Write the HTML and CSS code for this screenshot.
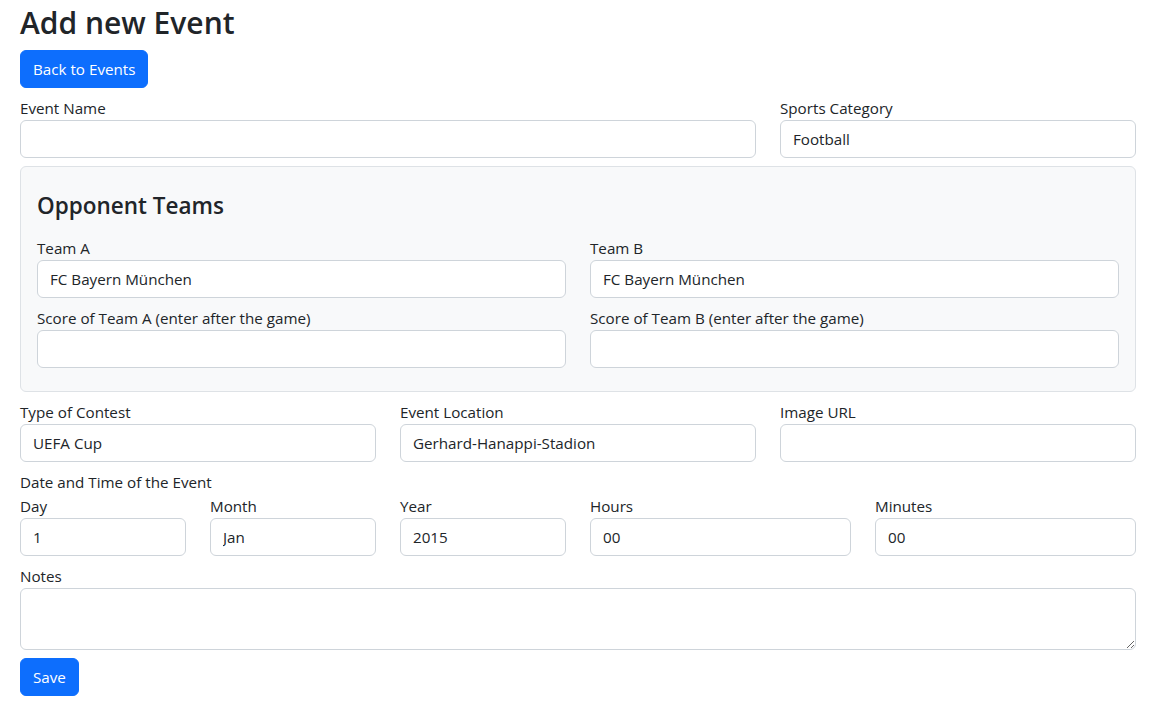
FILE: index.html
```html
<!DOCTYPE html>
<html lang="en">
<head>
<meta charset="utf-8">
<title>Add new Event</title>
<link rel="stylesheet" href="styles.css">
</head>
<body>
<div class="page">
  <h1 class="title">Add new Event</h1>
  <button class="btn back">Back to Events</button>
  <form class="form">
    <div class="row">
      <div class="col col-8 group">
        <label class="label">Event Name</label>
        <input class="field" type="text" value="">
      </div>
      <div class="col col-4 group">
        <label class="label">Sports Category</label>
        <input class="field" type="text" value="Football">
      </div>
    </div>
    <div class="panel">
      <h4 class="panel-title">Opponent Teams</h4>
      <div class="row">
        <div class="col col-6 group">
          <label class="label">Team A</label>
          <input class="field" type="text" value="FC Bayern München">
        </div>
        <div class="col col-6 group">
          <label class="label">Team B</label>
          <input class="field" type="text" value="FC Bayern München">
        </div>
        <div class="col col-6 group">
          <label class="label">Score of Team A (enter after the game)</label>
          <input class="field" type="text" value="">
        </div>
        <div class="col col-6 group">
          <label class="label">Score of Team B (enter after the game)</label>
          <input class="field" type="text" value="">
        </div>
      </div>
    </div>
    <div class="row">
      <div class="col col-4 group">
        <label class="label">Type of Contest</label>
        <input class="field" type="text" value="UEFA Cup">
      </div>
      <div class="col col-4 group">
        <label class="label">Event Location</label>
        <input class="field" type="text" value="Gerhard-Hanappi-Stadion">
      </div>
      <div class="col col-4 group">
        <label class="label">Image URL</label>
        <input class="field" type="text" value="">
      </div>
    </div>
    <div class="label date-label">Date and Time of the Event</div>
    <div class="row">
      <div class="col col-2 group">
        <label class="label">Day</label>
        <input class="field" type="text" value="1">
      </div>
      <div class="col col-2 group">
        <label class="label">Month</label>
        <input class="field" type="text" value="Jan">
      </div>
      <div class="col col-2 group">
        <label class="label">Year</label>
        <input class="field" type="text" value="2015">
      </div>
      <div class="col col-3 group">
        <label class="label">Hours</label>
        <input class="field" type="text" value="00">
      </div>
      <div class="col col-3 group">
        <label class="label">Minutes</label>
        <input class="field" type="text" value="00">
      </div>
    </div>
    <div class="group">
      <label class="label">Notes</label>
      <textarea class="field area" rows="2"></textarea>
    </div>
    <button class="btn save" type="button">Save</button>
  </form>
</div>
</body>
</html>
```
FILE: styles.css
```css
* { box-sizing: border-box; }
html, body { margin: 0; background: #fff; }
body {
  font-family: "Open Sans", "Noto Sans", sans-serif;
  font-size: 15.2px;
  line-height: 1.5;
  color: #212529;
}
.page { padding: 4px 18px 20px 20px; }
.title {
  font-size: 30px;
  font-weight: 600;
  line-height: 38px;
  margin: 0 0 8px;
}
.btn {
  display: inline-block;
  font-family: inherit;
  font-size: 15.2px;
  line-height: 24px;
  height: 38px;
  color: #fff;
  background: #0d6efd;
  border: 1px solid #0d6efd;
  border-radius: 6px;
  padding: 6px 12px;
  cursor: pointer;
}
.back { margin-bottom: 8px; }
.form { margin: 0; }
.row {
  display: flex;
  flex-wrap: wrap;
  margin: 0 -12px;
}
.col { padding: 0 12px; }
.col-2 { width: 16.6667%; }
.col-3 { width: 25%; }
.col-4 { width: 33.3333%; }
.col-6 { width: 50%; }
.col-8 { width: 66.6667%; }
.group { margin-bottom: 8px; }
.label {
  display: block;
  margin-bottom: 0;
  line-height: 24px;
}
.field {
  display: block;
  width: 100%;
  height: 38px;
  padding: 6px 12px;
  font-family: inherit;
  font-size: 15.2px;
  line-height: 24px;
  color: #212529;
  background: #fff;
  border: 1px solid #ced4da;
  border-radius: 6px;
  outline: none;
}
.area {
  height: 62px;
  resize: vertical;
}
.panel {
  background: #f8f9fa;
  border: 1px solid #dee2e6;
  border-radius: 6px;
  padding: 24px 16px 15px;
  margin-bottom: 8px;
}
.panel-title {
  font-size: 22.5px;
  font-weight: 600;
  line-height: 29px;
  margin: 0 0 16px;
}
.date-label { margin-bottom: 0; }
```
